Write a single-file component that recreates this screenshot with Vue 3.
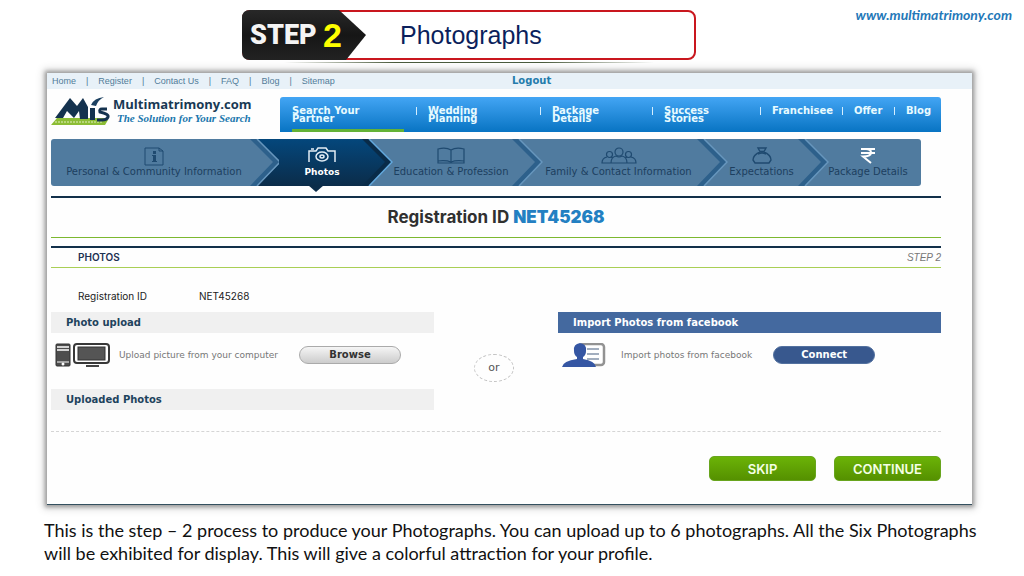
<script setup>
const topLinks = ['Home', 'Register', 'Contact Us', 'FAQ', 'Blog', 'Sitemap']
const navLinks = ['Search Your Partner', 'Wedding Planning', 'Package Details', 'Success Stories', 'Franchisee', 'Offer', 'Blog']
const steps = [
  { label: 'Personal & Community Information', icon: 'info' },
  { label: 'Photos', icon: 'camera', active: true },
  { label: 'Education & Profession', icon: 'book' },
  { label: 'Family & Contact Information', icon: 'people' },
  { label: 'Expectations', icon: 'ring' },
  { label: 'Package Details', icon: 'rupee' }
]
</script>

<template>
  <div class="slide">
    <header class="slide-head">
      <div class="banner">
        <svg class="tag" viewBox="0 0 124 50" aria-hidden="true">
          <defs>
            <linearGradient id="tagFill" x1="0" y1="0" x2="0" y2="1">
              <stop offset="0" stop-color="#282828" /><stop offset=".5" stop-color="#161616" /><stop offset="1" stop-color="#222" />
            </linearGradient>
          </defs>
          <path d="M8 0H97L124 25L104 50H8Q0 50 0 42V8Q0 0 8 0Z" fill="url(#tagFill)" />
        </svg>
        <div class="step-label"><span class="step-word">STEP</span><span class="step-number">2</span></div>
        <h1>Photographs</h1>
      </div>
      <a class="site-url" href="#">www.multimatrimony.com</a>
    </header>

    <main class="panel">
      <div class="topbar">
        <ul class="top-links">
          <li v-for="link in topLinks" :key="link"><a href="#">{{ link }}</a></li>
        </ul>
        <a class="logout" href="#">Logout</a>
      </div>

      <div class="content">
        <div class="masthead">
          <a class="brand" href="#">
            <svg class="logo" viewBox="0 0 60 28" aria-hidden="true">
              <path d="M6 21H52L57 23L54 28H0Z" fill="#8cbd35" />
              <path d="M4 25H52" stroke="#e2efc0" stroke-width="1" stroke-dasharray="2 1" />
              <path d="M4 21L19 1L26 9L32 1L37 10V22H29L28 14L23 21L16 14L12 21Z" fill="#14324e" />
              <path d="M39 11H44V23H39Z" fill="#14324e" />
              <path d="M56 12H51Q48 12 49 15Q58 17 57 20Q56 23 51 23H46" fill="none" stroke="#14324e" stroke-width="3" />
              <path d="M40 8Q43 1 53 0Q47 3 45 9Z" fill="#1c4060" />
            </svg>
            <span class="brand-text">
              <span class="brand-name">Multimatrimony.com</span>
              <span class="tagline">The Solution for Your Search</span>
            </span>
          </a>
          <nav class="main-nav">
            <a v-for="(link, i) in navLinks" :key="link" href="#" :class="{ current: i === 0 }"><span>{{ link }}</span></a>
          </nav>
        </div>

        <ol class="steps">
          <li v-for="(step, i) in steps" :key="step.label" :class="{ active: step.active }">
            <svg v-if="step.icon === 'info'" class="icon" viewBox="0 0 36 20" fill="none" stroke="#1f4a70" aria-hidden="true">
              <path d="M9 1H23L27 4V18H9ZM23 1V4H27" />
              <path d="M18.500 4V7M18.500 8V14" stroke-width="3" /><path d="M16 8.500H18M16 14.500H21" />
            </svg>
            <svg v-else-if="step.icon === 'camera'" class="icon" viewBox="0 0 36 20" fill="none" stroke="#e3edf5" stroke-width="1.5" aria-hidden="true">
              <path d="M5 15V4H12L14 1H22L24 4H31V15M7 2H10" />
              <ellipse cx="18" cy="9.5" rx="6" ry="4.5" /><ellipse cx="18" cy="9.5" rx="2" ry="1.5" />
            </svg>
            <svg v-else-if="step.icon === 'book'" class="icon" viewBox="0 0 36 20" fill="none" stroke="#1f4a70" stroke-width="1.2" aria-hidden="true">
              <path d="M5 16V2Q13 0 18 3Q23 0 31 2V16ZM18 3V16M5 14Q13 13 18 15Q23 13 31 14" />
            </svg>
            <svg v-else-if="step.icon === 'people'" class="icon" viewBox="0 0 36 20" fill="none" stroke="#1f4a70" stroke-width="1.2" aria-hidden="true">
              <circle cx="18" cy="5" r="4" /><circle cx="8.500" cy="7.500" r="3" /><circle cx="27.500" cy="7.500" r="3" />
              <path d="M10 16Q10 10 15 9Q18 11 21 9Q26 10 26 16ZM10 16H1Q1 11 6 10M10 10L12 11M26 16H35Q35 11 30 10M26 10L24 11" />
            </svg>
            <svg v-else-if="step.icon === 'ring'" class="icon" viewBox="0 0 36 20" fill="none" stroke="#1f4a70" stroke-width="1.4" aria-hidden="true">
              <path d="M14 1H22L20 4.500H16ZM16 5Q9 8 9 13L11 16H25L27 13Q27 8 20 5M14 7Q18 5 22 7" />
            </svg>
            <svg v-else class="icon" viewBox="0 0 36 20" fill="none" stroke="#fff" stroke-width="2" aria-hidden="true">
              <path d="M11 2H25M11 6H25M12 2H16Q21 2 21 5.500Q21 9.500 13 9.500L21 16" />
            </svg>
            <span class="step-name">{{ step.label }}</span>
            <svg v-if="i < steps.length - 1" class="chevron" viewBox="0 0 32 47" aria-hidden="true">
              <path v-if="i === 0" d="M8 0H32V47H8L32 23Z" fill="url(#activeFill)" />
              <path v-if="i === 1" d="M5 0H32V47H5L29 23Z" fill="#507b9f" />
              <path d="M1 0H8L31 23L8 47H1L24 23Z" :fill="step.active ? '#092b48' : '#2d608b'" />
              <path d="M8 0L31 23L8 47" fill="none" :stroke="step.active ? '#62a8dd' : '#6796bd'" stroke-width="1.5" />
              <defs v-if="i === 0">
                <linearGradient id="activeFill" x1="0" y1="0" x2="0" y2="1">
                  <stop offset="0" stop-color="#04477c" /><stop offset="1" stop-color="#0b2c49" />
                </linearGradient>
              </defs>
            </svg>
          </li>
        </ol>

        <h2>Registration ID <strong>NET45268</strong></h2>

        <div class="section-head">
          <h3>PHOTOS</h3>
          <em>STEP 2</em>
        </div>

        <dl class="registration">
          <dt>Registration ID</dt>
          <dd>NET45268</dd>
        </dl>

        <div class="sources">
          <section>
            <h4>Photo upload</h4>
            <div class="source-row">
              <svg class="pc" viewBox="0 0 56 24" aria-hidden="true">
                <rect x="1" y="1" width="14" height="22" rx="1" fill="#4d4d4d" stroke="#303030" />
                <path d="M2 4H14M2 7H14" stroke="#fff" stroke-width="1.5" /><path d="M2 19H14" stroke="#fff" />
                <circle cx="8" cy="21" r="1.500" fill="#fff" />
                <rect x="19" y="1" width="35" height="19" rx="3" fill="#fff" stroke="#383838" stroke-width="2" />
                <rect x="23" y="4" width="27" height="13" fill="#555" stroke="#333" /><path d="M31 23H44" stroke="#444" stroke-width="2" />
              </svg>
              <span class="hint">Upload picture from your computer</span>
              <button type="button" class="pill browse">Browse</button>
            </div>
            <h4>Uploaded Photos</h4>
          </section>
          <div class="divider"><span>or</span></div>
          <section>
            <h4 class="facebook">Import Photos from facebook</h4>
            <div class="source-row">
              <svg class="profile" viewBox="0 0 44 24" aria-hidden="true">
                <rect x="18" y="1" width="24" height="21" rx="3" fill="#fff" stroke="#929292" stroke-width="2.500" />
                <path d="M25 6H37M25 11H37M25 16H37" stroke="#8494aa" stroke-width="1.500" />
                <path d="M12 8Q11 1 18 0Q25 1 24 8Q24 12 21 14V16Q33 18 34 24H0Q1 18 15 16V14Q12 12 12 8Z" fill="#3556a3" />
              </svg>
              <span class="hint">Import photos from facebook</span>
              <button type="button" class="pill connect">Connect</button>
            </div>
          </section>
        </div>

        <div class="actions">
          <button type="button">SKIP</button>
          <button type="button">CONTINUE</button>
        </div>
      </div>
    </main>

    <p class="caption">This is the step – 2 process to produce your Photographs. You can upload up to 6 photographs. All the Six Photographs will be exhibited for display. This will give a colorful attraction for your profile.</p>
  </div>
</template>

<style>
body { background: #fff; }
</style>

<style scoped>
* { box-sizing: border-box; }
h1, h2, h3, h4, p, ul, ol, dl, dd { margin: 0; padding: 0; }
ul, ol { list-style: none; }
a { color: inherit; text-decoration: none; }
button { font: inherit; cursor: pointer; padding: 0; }
.slide { font-family: "Liberation Sans", Arial, sans-serif; overflow: hidden; padding-bottom: 8px; }

.slide-head { display: grid; grid-template-columns: 242px minmax(0, 454px) 1fr; height: 73px; }
.banner {
  grid-column: 2; position: relative; display: flex; align-items: center; height: 50px; margin-top: 10px;
  border: 2px solid #c9171e; border-radius: 8px; background: #fff;
}
.banner::after {
  content: ""; position: absolute; left: 40px; right: 40px; bottom: -5px; height: 1px;
  background: linear-gradient(90deg, transparent, #4a5a3c 30%, #4a5a3c 70%, transparent);
}
.tag { position: absolute; left: -2px; top: -2px; width: 124px; height: 50px; }
.step-label { position: relative; display: flex; align-items: center; justify-content: space-between; width: 92px; margin-left: 6px; }
.step-word { font: 900 27px/46px Roboto, sans-serif; color: #f4f4f4; }
.step-number { font-size: 34px; font-weight: bold; line-height: 46px; color: #ff0; }
h1 { margin-left: 58px; font-size: 25px; line-height: 46px; font-weight: normal; color: #0b1f5c; }
.site-url { justify-self: end; margin: 5px 12px 0 0; font: italic bold 14px/20px Lato, sans-serif; color: #2478b8; }

.panel { margin: 0 52px 0 47px; background: #fefefe; border-bottom: 1px solid #34505f; box-shadow: 0 0 4px 2px #999, 0 0 8px 4px #ddd; }
.topbar { display: grid; grid-template-columns: 1fr 1fr; align-items: center; height: 16px; padding-left: 5px; background: #e8f1f8; }
.top-links { display: flex; font-size: 9px; line-height: 14px; color: #527c99; }
.top-links li + li::before { content: "|"; padding: 0 10px; }
.logout { font: bold 10px/14px "DejaVu Sans", sans-serif; color: #247cac; }
.content { padding: 8px 31px 23px 4px; }
.masthead { display: grid; grid-template-columns: 229px 1fr; height: 35px; }
.brand { display: flex; align-items: flex-start; gap: 2px; }
.logo { width: 60px; height: 28px; }
.brand-text { display: flex; flex-direction: column; }
.brand-name { font: bold 13px/15px "Open Sans", sans-serif; color: #183954; }
.tagline { padding-left: 4px; font: italic bold 11px/12px "Liberation Serif", serif; color: #1976ad; white-space: nowrap; }
.main-nav {
  display: grid; grid-template-columns: 136fr 124fr 112fr 108fr 82fr 52fr 47fr; border-radius: 3px 3px 0 0;
  background: linear-gradient(#43a5f4, #0874c3); font: bold 10px/8px "DejaVu Sans", sans-serif; color: #e8fbff;
}
.main-nav a { position: relative; padding: 10px 0 0 12px; }
.main-nav a + a::before { content: ""; position: absolute; left: 0; top: 10px; width: 1px; height: 8px; background: #d4eeff; }
.main-nav span { display: block; max-width: 74px; }
.main-nav .current::after { content: ""; position: absolute; left: 12px; right: 12px; bottom: 0; height: 3px; background: #63b236; }

.steps {
  display: grid; grid-template-columns: 228fr 112fr 150fr 185fr 101fr 94fr; height: 47px; margin: 7px 20px 10px 0;
  border-radius: 3px; background: #507b9f; color: #1d3f60;
}
.steps li { position: relative; display: flex; flex-direction: column; align-items: center; padding: 8px 30px 0 0; }
.steps li:first-child { padding-right: 22px; }
.steps li:last-child { padding-right: 12px; }
.steps .active { padding-right: 26px; background: linear-gradient(#04477c, #0b2c49); color: #fff; font-weight: bold; }
.steps .active::after { content: ""; position: absolute; left: 29px; top: 46px; border: 8px solid transparent; border-top: 7px solid #0b2c49; border-bottom: 0; }
.icon { width: 36px; height: 20px; }
.step-name { position: relative; z-index: 1; font: 10px/10px "DejaVu Sans", sans-serif; white-space: nowrap; }
.active .step-name { font: bold 9px/10px "DejaVu Sans", sans-serif; }
.chevron { position: absolute; right: -2px; top: 0; width: 32px; height: 47px; }

h2 { border-top: 2px solid #12304a; border-bottom: 1px solid #7cb82f; text-align: center; font: bold 17px/39px Inter, sans-serif; color: #303030; }
h2 strong { color: #2380c2; }
.section-head {
  display: flex; justify-content: space-between; margin-top: 8px; padding-left: 27px; border-top: 2px solid #12304a;
  border-bottom: 1px solid #a9cf55; line-height: 19px;
}
h3 { font: 600 10px/19px Inter, sans-serif; color: #1d3152; }
.section-head em { font-size: 10px; color: #777; }
.registration { display: grid; grid-template-columns: 121px 1fr; padding: 21px 0 9px 27px; font: 10px/14px Inter, sans-serif; color: #222; }
.sources { display: grid; grid-template-columns: 1fr 124px 1fr; padding-bottom: 21px; border-bottom: 1px dashed #d5d5d5; }
h4 { padding-left: 15px; background: #f0f0f0; font: bold 10px/21px "DejaVu Sans", sans-serif; color: #1e435d; }
.facebook { background: #44699f; color: #fff; }
.source-row { display: flex; align-items: center; height: 56px; padding: 0 0 12px 4px; }
.pc { width: 56px; height: 24px; margin-right: 8px; }
.profile { width: 44px; height: 24px; margin-right: 15px; }
.hint { font: 9px/14px "DejaVu Sans", sans-serif; color: #777; white-space: nowrap; }
.pill { width: 102px; height: 18px; margin-left: 21px; border-radius: 9px; font: bold 10px/14px "DejaVu Sans", sans-serif; }
.browse { border: 1px solid #aaa; background: linear-gradient(#f5f5f5, #ccc); color: #333; }
.connect { border: 1px solid #53719f; background: #38588e; color: #fff; }
.divider { display: flex; justify-content: center; align-items: center; padding-top: 14px; }
.divider span { width: 40px; height: 28px; margin-right: 4px; border: 1px dashed #c3c3c3; border-radius: 50%; text-align: center; font: 11px/25px "DejaVu Sans", sans-serif; color: #555; }
.actions { display: flex; justify-content: flex-end; gap: 18px; padding-top: 24px; }
.actions button { width: 107px; height: 25px; border: 1px solid #68a51e; border-radius: 5px; background: linear-gradient(#6bb307, #559000); font: 600 13px/20px Inter, sans-serif; color: #f4ffe5; }
.caption { margin: 14px 44px 0; font: 18px/23px Lato, sans-serif; color: #111; }
</style>
